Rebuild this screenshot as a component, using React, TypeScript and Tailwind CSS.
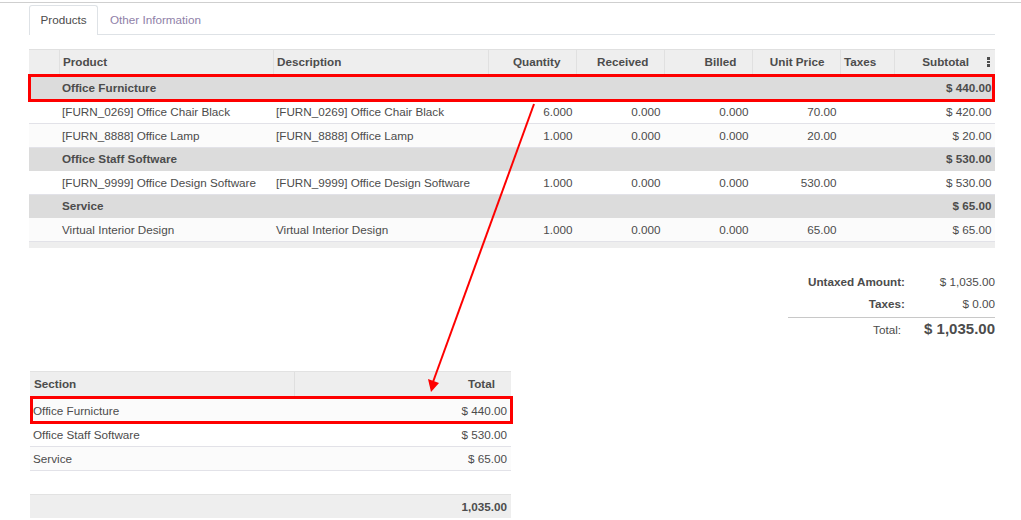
const groupRow = "bg-[#dcdcdc] font-bold";

type Line = {
  section?: boolean;
  name: string;
  desc?: string;
  qty?: string;
  price?: string;
  subtotal: string;
  h: string;
  odd?: boolean;
};

const lines: Line[] = [
  { section: true, name: "Office Furnicture", subtotal: "$ 440.00", h: "h-[25px]" },
  { name: "[FURN_0269] Office Chair Black", desc: "[FURN_0269] Office Chair Black", qty: "6.000", price: "70.00", subtotal: "$ 420.00", h: "h-[24px]" },
  { name: "[FURN_8888] Office Lamp", desc: "[FURN_8888] Office Lamp", qty: "1.000", price: "20.00", subtotal: "$ 20.00", h: "h-[24px]", odd: true },
  { section: true, name: "Office Staff Software", subtotal: "$ 530.00", h: "h-[23px] [&>td]:pb-[1px]" },
  { name: "[FURN_9999] Office Design Software", desc: "[FURN_9999] Office Design Software", qty: "1.000", price: "530.00", subtotal: "$ 530.00", h: "h-[24px]" },
  { section: true, name: "Service", subtotal: "$ 65.00", h: "h-[23px] [&>td]:pb-[1px]" },
  { name: "Virtual Interior Design", desc: "Virtual Interior Design", qty: "1.000", price: "65.00", subtotal: "$ 65.00", h: "h-[24px]", odd: true },
];

const headCell = "border-l border-t border-[#e0e0e0] px-[3px] pb-[1px] font-bold";
const bodyCell = "border-b border-[#e2e2e8] px-[3px]";
const numCell = "border-b border-[#e2e2e8] pl-[3px] pr-[3.4px] text-right";

function ProductTable() {
  return (
    <table className="w-[966px] table-fixed border-separate border-spacing-0">
      <colgroup>
        <col className="w-[30px]" />
        <col className="w-[214px]" />
        <col className="w-[215px]" />
        <col className="w-[88px]" />
        <col className="w-[88px]" />
        <col className="w-[88px]" />
        <col className="w-[88px]" />
        <col className="w-[54px]" />
        <col className="w-[101px]" />
      </colgroup>
      <thead>
        <tr className="h-[26px] bg-[#eeeeee]">
          <th className="border-t border-[#e0e0e0]"></th>
          <th className={headCell + " text-left"}>Product</th>
          <th className={headCell + " text-left"}>Description</th>
          <th className={headCell + " text-right pr-[15.6px]"}>Quantity</th>
          <th className={headCell + " text-right pr-[15.6px]"}>Received</th>
          <th className={headCell + " text-right pr-[15.6px]"}>Billed</th>
          <th className={headCell + " text-right pr-[15.6px]"}>Unit Price</th>
          <th className={headCell + " text-left"}>Taxes</th>
          <th className={headCell + " text-right"}>
            <div className="flex items-center justify-end pr-[2px]">
              <span>Subtotal</span>
              <span className="ml-[18px] flex flex-col gap-[1px]">
                <span className="h-[3px] w-[3px] bg-[#4c4c4c]"></span>
                <span className="h-[2px] w-[3px] bg-[#4c4c4c]"></span>
                <span className="h-[3px] w-[3px] bg-[#4c4c4c]"></span>
              </span>
            </div>
          </th>
        </tr>
      </thead>
      <tbody>
        {lines.map((l) =>
          l.section ? (
            <tr key={l.name} className={groupRow + " " + l.h}>
              <td></td>
              <td colSpan={7} className="px-[3px]">{l.name}</td>
              <td className="pl-[3px] pr-[3.4px] text-right">{l.subtotal}</td>
            </tr>
          ) : (
            <tr key={l.name} className={l.h + " " + (l.odd ? "bg-[#fbfbfb]" : "bg-white")}>
              <td className="border-b border-[#e2e2e8]"></td>
              <td className={bodyCell + " truncate"}>{l.name}</td>
              <td className={bodyCell + " truncate"}>{l.desc}</td>
              <td className={numCell}>{l.qty}</td>
              <td className={numCell}>0.000</td>
              <td className={numCell}>0.000</td>
              <td className={numCell}>{l.price}</td>
              <td className="border-b border-[#e2e2e8]"></td>
              <td className={numCell}>{l.subtotal}</td>
            </tr>
          )
        )}
      </tbody>
      <tfoot>
        <tr className="h-[6px] bg-[#eeeeee]">
          <td colSpan={9}></td>
        </tr>
      </tfoot>
    </table>
  );
}

function Totals() {
  return (
    <div className="mt-[23px] flex justify-end">
      <div className="w-[207px]">
        <div className="flex h-[22px] items-center justify-end">
          <span className="font-bold">Untaxed Amount:</span>
          <span className="w-[90px] text-right">$ 1,035.00</span>
        </div>
        <div className="flex h-[22px] items-center justify-end">
          <span className="font-bold">Taxes:</span>
          <span className="w-[90px] text-right">$ 0.00</span>
        </div>
        <div className="mt-[2px] flex h-[24px] items-center justify-end border-t border-[#c8c8c8]">
          <span className="mr-[3px]">Total:</span>
          <span className="w-[91px] text-right text-[15px] font-bold">$ 1,035.00</span>
        </div>
      </div>
    </div>
  );
}

const sections = [
  { name: "Office Furnicture", total: "$ 440.00", bg: "bg-[#fbfbfb]", h: "h-[26px] pt-[2px]" },
  { name: "Office Staff Software", total: "$ 530.00", bg: "bg-white", h: "h-[24px]" },
  { name: "Service", total: "$ 65.00", bg: "bg-[#fbfbfb]", h: "h-[24px]" },
];

function SectionTable() {
  return (
    <div className="ml-[1px] mt-[30px] w-[481px]">
      <div className="flex h-[26px] border-t border-[#e2e2e2] bg-[#eeeeee] pb-[1px] font-bold">
        <div className="flex w-[265px] items-center border-r border-[#dfdfdf] pl-[4px]">Section</div>
        <div className="flex flex-1 items-center justify-end pr-[16px]">Total</div>
      </div>
      {sections.map((s) => (
        <div key={s.name} className={"flex items-center justify-between border-b border-[#e2e2e8] pl-[3px] pr-[4px] " + s.h + " " + s.bg}>
          <span>{s.name}</span>
          <span>{s.total}</span>
        </div>
      ))}
      <div className="mt-[23px] flex h-[24px] items-center justify-end border-t border-[#e2e2e2] bg-[#eeeeee] pr-[4px] pt-[1px] font-bold">
        1,035.00
      </div>
    </div>
  );
}

export default function App() {
  return (
    <div className="relative h-[520px] w-[1021px] overflow-hidden bg-white pl-[29px] pr-[26px] pt-[2px] font-['Liberation_Sans',Arial,sans-serif] text-[11.7px] text-[#4c4c4c]">
      <div className="absolute left-0 right-0 top-[2px] h-px bg-[#cfcfcf]"></div>

      <div className="mt-[3px] flex h-[30px] border-b border-[#dee2e6]">
        <div className="mb-[-1px] flex h-[30px] w-[69px] items-center justify-center rounded-t-[3px] border border-b-0 border-[#dee2e6] bg-white pb-[1px]">
          Products
        </div>
        <div className="flex items-center pl-[12px] text-[#8f7fa8]">Other Information</div>
      </div>

      <div className="mt-[14px]">
        <ProductTable />
      </div>
      <Totals />
      <SectionTable />

      {/* red annotations drawn over the page */}
      <div className="absolute left-[28px] top-[74px] h-[28px] w-[967px] border-[3px] border-[#fe0000]"></div>
      <div className="absolute left-[30px] top-[396px] h-[28px] w-[483px] border-[3px] border-[#fe0000]"></div>
      <svg className="absolute left-0 top-0" width="1021" height="520" fill="none">
        <line x1="534" y1="104" x2="433" y2="382" stroke="#fe0000" strokeWidth="2" />
        <polygon points="431,392 428,379 439,383" fill="#fe0000" />
      </svg>
    </div>
  );
}
